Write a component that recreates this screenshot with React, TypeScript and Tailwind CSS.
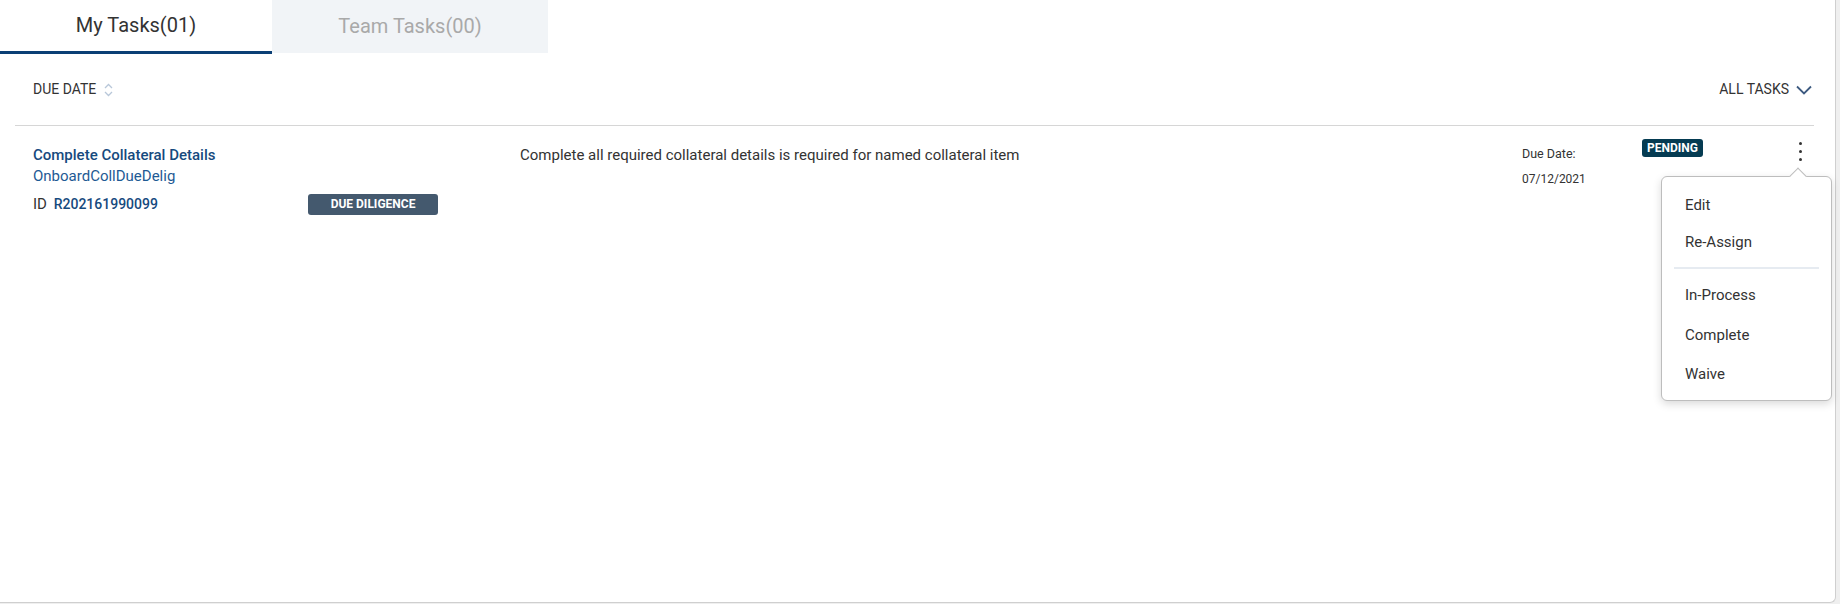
import React from "react";

const font = { fontFamily: "Roboto, 'Noto Sans', sans-serif" };

export default function App() {
  return (
    <div className="w-[1840px] h-[604px] bg-[#efefef] overflow-hidden" style={font}>
      <div className="relative w-[1836px] h-[603px] bg-white border-r border-b border-[#cfcfcf] rounded-br-[6px]">
        {/* Tabs */}
        <div className="flex h-[54px]">
          <div className="w-[272px] h-full flex items-center justify-center border-b-[3px] border-[#0b3f75] text-[20px] text-[#333] pb-[2px]">
            My Tasks(01)
          </div>
          <div className="w-[276px] h-[53px] flex items-center justify-center bg-[#f1f4f7] text-[20px] text-[#a9a9a9] pb-[2px]">
            Team Tasks(00)
          </div>
        </div>
        {/* Header */}
        <div className="flex items-center justify-between h-[71px] pl-[33px] pr-[23px]">
          <div className="flex items-center gap-[8px] text-[14px] text-[#333]">
            <span>DUE DATE</span>
            <svg width="9" height="14" viewBox="0 0 9 14" fill="none" stroke="#b8c7d9" strokeWidth="1.3">
              <path d="M1 5 L4.5 1.5 L8 5" />
              <path d="M1 9 L4.5 12.5 L8 9" />
            </svg>
          </div>
          <div className="flex items-center gap-[7px] text-[14px] text-[#333]">
            <span>ALL TASKS</span>
            <svg width="16" height="10" viewBox="0 0 16 10" fill="none" stroke="#3d5a80" strokeWidth="1.8">
              <path d="M1 1.5 L8 8.5 L15 1.5" />
            </svg>
          </div>
        </div>
        <div className="mx-[15px] mr-[21px] h-px bg-[#d6d6d6]" />
        {/* Row */}
        <div className="flex items-start pl-[33px] pr-[20px] pt-[18px]">
          <div className="w-[487px] flex flex-col">
            <div className="text-[15px] leading-[22px] font-medium text-[#164a7e]">Complete Collateral Details</div>
            <div className="text-[15px] leading-[22px] text-[#1e5a94] -mt-[1px]">OnboardCollDueDelig</div>
            <div className="flex items-center mt-[6px]">
              <div className="w-[275px] text-[15px] leading-[22px] text-[#333]">
                ID <span className="ml-[3px] text-[14px] font-medium text-[#164a7e]">R202161990099</span>
              </div>
              <div className="h-[21px] w-[130px] flex items-center justify-center rounded-[3px] bg-[#44596e] text-white text-[12px] font-bold">
                DUE DILIGENCE
              </div>
            </div>
          </div>
          <div className="w-[1002px] text-[15px] leading-[22px] text-[#333]">
            Complete all required collateral details is required for named collateral item
          </div>
          <div className="w-[120px] flex flex-col text-[12px] text-[#333]">
            <div className="leading-[20px] text-[12.5px]">Due Date:</div>
            <div className="leading-[20px] mt-[5px]">07/12/2021</div>
          </div>
          <div className="h-[18px] px-[5px] flex items-center rounded-[3px] bg-[#053b52] text-white text-[12px] font-bold mt-[-5px]">
            PENDING
          </div>
          <div className="ml-auto mr-[13px] flex flex-col items-center gap-[5px] mt-[-2px]">
            <span className="w-[3px] h-[3px] rounded-full bg-[#333]" />
            <span className="w-[3px] h-[3px] rounded-full bg-[#333]" />
            <span className="w-[3px] h-[3px] rounded-full bg-[#333]" />
          </div>
        </div>
        {/* Menu */}
        <div className="absolute left-[1661px] top-[176px] w-[171px] h-[225px] bg-white border border-[#bdbdbd] rounded-[6px] shadow-[0_3px_8px_rgba(0,0,0,0.15)] py-[10px]">
          <div className="absolute -top-[7px] left-[130px] w-[12px] h-[12px] bg-white border-l border-t border-[#bdbdbd] rotate-45" />
          <div className="flex flex-col text-[15px] text-[#333] pl-[23px]">
            <div className="h-[36px] flex items-center">Edit</div>
            <div className="h-[38px] flex items-center">Re-Assign</div>
          </div>
          <div className="mx-[12px] mt-[6px] mb-[6px] h-[2px] bg-[#e6ebf1]" />
          <div className="flex flex-col text-[15px] text-[#333] pl-[23px]">
            <div className="h-[40px] flex items-center">In-Process</div>
            <div className="h-[40px] flex items-center">Complete</div>
            <div className="h-[38px] flex items-center">Waive</div>
          </div>
        </div>
      </div>
    </div>
  );
}
